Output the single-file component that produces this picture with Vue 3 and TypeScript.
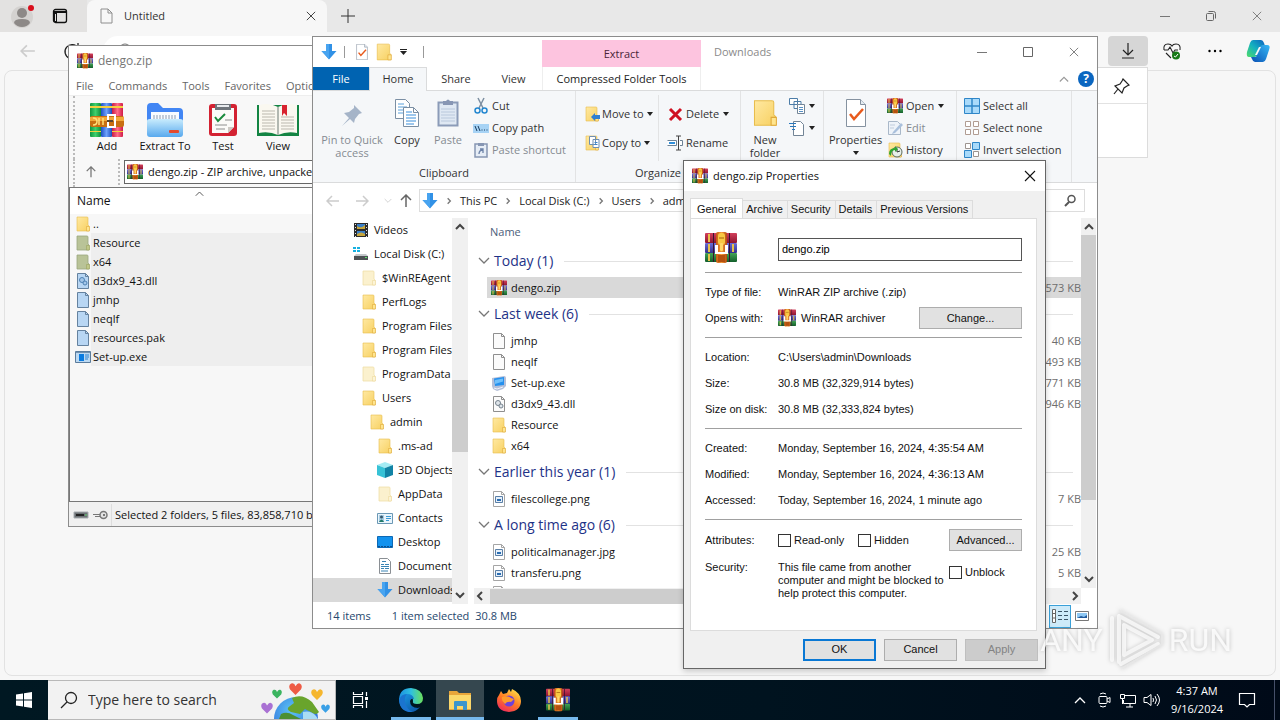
<script setup lang="ts">
import { ref } from 'vue'

interface Entry { name: string; icon: string; size?: string; selected?: boolean }
interface Group { title: string; rows: Entry[] }
interface TreeNode { name: string; icon: string; depth: number; current?: boolean }

const archiveTools = [
  { label: 'Add', icon: 'books', width: 56 },
  { label: 'Extract To', icon: 'extract', width: 60 },
  { label: 'Test', icon: 'clipcheck', width: 56 },
  { label: 'View', icon: 'book', width: 54 },
]
const archiveMenu = ['File', 'Commands', 'Tools', 'Favorites', 'Options']
const archiveRows: Entry[] = [
  { name: '..', icon: 'folder' },
  { name: 'Resource', icon: 'folder-sel', selected: true },
  { name: 'x64', icon: 'folder-sel', selected: true },
  { name: 'd3dx9_43.dll', icon: 'dll-sel', selected: true },
  { name: 'jmhp', icon: 'doc-sel', selected: true },
  { name: 'neqlf', icon: 'doc-sel', selected: true },
  { name: 'resources.pak', icon: 'doc-sel', selected: true },
  { name: 'Set-up.exe', icon: 'exe-sel', selected: true },
]

const tree: TreeNode[] = [
  { name: 'Videos', icon: 'video', depth: 0 },
  { name: 'Local Disk (C:)', icon: 'disk', depth: 0 },
  { name: '$WinREAgent', icon: 'folder-pale', depth: 1 },
  { name: 'PerfLogs', icon: 'folder', depth: 1 },
  { name: 'Program Files', icon: 'folder', depth: 1 },
  { name: 'Program Files (x86)', icon: 'folder', depth: 1 },
  { name: 'ProgramData', icon: 'folder-pale', depth: 1 },
  { name: 'Users', icon: 'folder', depth: 1 },
  { name: 'admin', icon: 'folder', depth: 2 },
  { name: '.ms-ad', icon: 'folder', depth: 3 },
  { name: '3D Objects', icon: 'cube', depth: 3 },
  { name: 'AppData', icon: 'folder-pale', depth: 3 },
  { name: 'Contacts', icon: 'contact', depth: 3 },
  { name: 'Desktop', icon: 'screen', depth: 3 },
  { name: 'Documents', icon: 'docs', depth: 3 },
  { name: 'Downloads', icon: 'down', depth: 3, current: true },
]

const groups: Group[] = [
  { title: 'Today (1)', rows: [{ name: 'dengo.zip', icon: 'rar', size: '31,573 KB', selected: true }] },
  {
    title: 'Last week (6)',
    rows: [
      { name: 'jmhp', icon: 'doc', size: '40 KB' },
      { name: 'neqlf', icon: 'doc', size: '1,493 KB' },
      { name: 'Set-up.exe', icon: 'setup', size: '6,771 KB' },
      { name: 'd3dx9_43.dll', icon: 'dll', size: '1,946 KB' },
      { name: 'Resource', icon: 'folder' },
      { name: 'x64', icon: 'folder' },
    ],
  },
  { title: 'Earlier this year (1)', rows: [{ name: 'filescollege.png', icon: 'img', size: '7 KB' }] },
  {
    title: 'A long time ago (6)',
    rows: [
      { name: 'politicalmanager.jpg', icon: 'img', size: '25 KB' },
      { name: 'transferu.png', icon: 'img', size: '5 KB' },
      { name: '', icon: 'img' },
    ],
  },
]

const crumbs = ['This PC', 'Local Disk (C:)', 'Users', 'admin']
const tabs = ['General', 'Archive', 'Security', 'Details', 'Previous Versions']
const activeTab = ref('General')
const fileName = ref('dengo.zip')
const location = [
  ['Location:', 'C:\\Users\\admin\\Downloads'],
  ['Size:', '30.8 MB (32,329,914 bytes)'],
  ['Size on disk:', '30.8 MB (32,333,824 bytes)'],
]
const dates = [
  ['Created:', 'Monday, September 16, 2024, 4:35:54 AM'],
  ['Modified:', 'Monday, September 16, 2024, 4:36:13 AM'],
  ['Accessed:', 'Today, September 16, 2024, 1 minute ago'],
]
</script>

<template>
  <svg class="sprite" aria-hidden="true">
    <defs>
      <linearGradient id="gf" x1="0" y1="0" x2="1" y2="1"><stop offset="0" stop-color="#ffe9a2" /><stop offset="1" stop-color="#f7d061" /></linearGradient>
      <linearGradient id="gr" x1="0" y1="0" x2="0" y2="1"><stop offset="0" stop-color="#d3405c" /><stop offset="1" stop-color="#8e1430" /></linearGradient>
      <linearGradient id="gb" x1="0" y1="0" x2="0" y2="1"><stop offset="0" stop-color="#6a6ed8" /><stop offset="1" stop-color="#33308c" /></linearGradient>
      <linearGradient id="gg" x1="0" y1="0" x2="0" y2="1"><stop offset="0" stop-color="#42a456" /><stop offset="1" stop-color="#135f2b" /></linearGradient>
      <linearGradient id="go" x1="0" y1="0" x2="1" y2="0"><stop offset="0" stop-color="#c55a12" /><stop offset=".5" stop-color="#f39a3c" /><stop offset="1" stop-color="#b44b10" /></linearGradient>
      <linearGradient id="ge" x1="0" y1="0" x2="0" y2="1"><stop offset="0" stop-color="#c9ecfd" /><stop offset="1" stop-color="#58a9ee" /></linearGradient>
      <linearGradient id="bk1" x1="0" y1="0" x2="1" y2="0"><stop offset="0" stop-color="#0f9440" /><stop offset=".5" stop-color="#3fd06c" /><stop offset="1" stop-color="#0f8c3a" /></linearGradient>
      <linearGradient id="bk2" x1="0" y1="0" x2="1" y2="0"><stop offset="0" stop-color="#1d4fc4" /><stop offset=".5" stop-color="#6ea2fb" /><stop offset="1" stop-color="#1c4cbc" /></linearGradient>
      <linearGradient id="bk3" x1="0" y1="0" x2="1" y2="0"><stop offset="0" stop-color="#c81a44" /><stop offset=".5" stop-color="#ff6c88" /><stop offset="1" stop-color="#d01c48" /></linearGradient>
      <linearGradient id="edge1" x1="0" y1="0" x2="1" y2="0"><stop offset="0" stop-color="#1b8fe0" /><stop offset=".5" stop-color="#2fc0e0" /><stop offset="1" stop-color="#6be05a" /></linearGradient>
      <linearGradient id="edge2" x1="0" y1="0" x2="1" y2="1"><stop offset="0" stop-color="#1b9de8" /><stop offset="1" stop-color="#0b4fa0" /></linearGradient>
      <linearGradient id="ff" x1=".8" y1="0" x2=".2" y2="1"><stop offset="0" stop-color="#ffe14a" /><stop offset=".5" stop-color="#ff7a22" /><stop offset="1" stop-color="#ee2561" /></linearGradient>
      <linearGradient id="cp1" x1="0" y1="1" x2="1" y2="0"><stop offset="0" stop-color="#4fdc6a" /><stop offset=".5" stop-color="#14b0c0" /><stop offset="1" stop-color="#0d5fc0" /></linearGradient>
      <linearGradient id="cp2" x1="0" y1="1" x2="1" y2="0"><stop offset="0" stop-color="#0a50b4" /><stop offset="1" stop-color="#35b8f5" /></linearGradient>
      <radialGradient id="globe" cx=".4" cy=".3" r=".7"><stop offset="0" stop-color="#5cc3f5" /><stop offset="1" stop-color="#2b66d8" /></radialGradient>
    </defs>
    <symbol id="rar" viewBox="0 0 32 32">
      <rect x="0" y="1" width="32" height="10" rx="1" fill="url(#gr)" /><rect x="0" y="11" width="32" height="10" rx="1" fill="url(#gb)" /><rect x="0" y="21" width="32" height="9" rx="1" fill="url(#gg)" />
      <path d="M3 2h2v8H3zM3 12h2v8H3zM3 22h2v7H3zM27 12h2v8h-2z" fill="#e8c24a" /><path d="M8 1h1v29H8zM24 1h1v29h-1z" fill="#3a1230" />
      <rect x="11" y="0" width="11" height="31" rx="2" fill="url(#go)" />
      <rect x="13" y="1" width="7" height="12" rx="3" fill="#f8c843" /><path d="M14 6h5" stroke="#a8640e" />
      <path d="M10 13h3v7h7v-7h3v9H10z" fill="#fff" /><rect x="15" y="11" width="3" height="8" rx="1" fill="#ffd868" /><path d="M13 23h7v7h-7z" fill="#b4500f" />
    </symbol>
    <symbol id="books" viewBox="0 0 34 34">
      <rect x="0" y="0" width="11" height="34" rx="1" fill="url(#bk1)" /><rect x="11" y="0" width="11" height="34" rx="1" fill="url(#bk2)" /><rect x="22" y="0" width="11" height="34" rx="1" fill="url(#bk3)" />
      <path d="M0 3h11v2H0zM11 3h11v2H11zM22 3h11v2H22zM0 28h11v1H0zM22 28h11v1H22z" fill="#f4cf3f" />
      <rect x="0" y="13" width="34" height="11" rx="2" fill="#c86f12" /><path d="M0 14h34v4H0z" fill="#f2a83a" />
      <path d="M3 15q4 0 4 3.500T3 22M9 15v7M13 15v7" fill="none" stroke="#ffe07a" stroke-width="1.500" /><rect x="18" y="12" width="7" height="12" fill="none" stroke="#fff" stroke-width="2" /><path d="M17 18h6" stroke="#5b4630" stroke-width="2" />
    </symbol>
    <symbol id="extract" viewBox="0 0 36 34">
      <path d="M0 4q0-4 4-4h7l5 5h16q4 0 4 4v9H0z" fill="#4286f4" /><path d="M4 9h28v10H4z" fill="#f8fbff" />
      <path d="M6 13h24M6 15h24" stroke="#8d9cb2" stroke-dasharray="2 1" /><path d="M0 18q0-2 3-2h30q3 0 3 2v13q0 3-3 3H3q-3 0-3-3z" fill="url(#ge)" /><rect x="22" y="27" width="10" height="3" rx="1" fill="#e4492c" />
    </symbol>
    <symbol id="clipcheck" viewBox="0 0 30 34">
      <rect x="1" y="1" width="28" height="32" rx="3" fill="#d32232" /><path d="M4 5h22v19l-6 6H4z" fill="#fbfaf8" /><path d="M20 30v-6h6z" fill="#cdc9c4" />
      <path d="M7 1h16v6H7z" fill="#6f757b" /><path d="M9 2h12v2H9z" fill="#e8ebee" /><path d="m7 14 3 4 7-7" fill="none" stroke="#1a8a3c" stroke-width="2" /><path d="M17 17h7M7 22h12M8 26h9" stroke="#8e8e8e" />
    </symbol>
    <symbol id="book" viewBox="0 0 42 34">
      <path d="M0 2h42v31H0z" fill="#138443" /><path d="M2 2q10-3 19 2 9-5 19-2v28q-10-2-19 2-9-4-19-2z" fill="#faf8f0" />
      <path d="M21 4v28" stroke="#9aa39c" stroke-width="1.500" /><path d="M5 8h13M5 11h13M5 14h13M5 17h13M5 20h13M5 23h13M5 26h13M24 14h13M24 17h13M24 20h13M24 23h13M24 26h13" stroke="#bbb8ae" /><path d="M25 2h5v11l-3-3-2 3z" fill="#d8232f" />
    </symbol>
    <symbol id="folder" viewBox="0 0 16 16"><path d="M2 1h10q1 0 1 1v7l1 1v5H2z" fill="url(#gf)" stroke="#e8bd4c" stroke-width=".6" /><path d="M11.500 10.500h3V15h-3z" fill="#ffe58e" stroke="#dfa93b" stroke-width=".6" /></symbol>
    <symbol id="folder-pale" viewBox="0 0 16 16"><path d="M2 1h10q1 0 1 1v7l1 1v5H2z" fill="#fbf1ce" stroke="#f0e0a8" stroke-width=".8" /><path d="M11.500 10.500h3V15h-3z" fill="#fcf4d6" stroke="#ecd99a" stroke-width=".6" /></symbol>
    <symbol id="folder-sel" viewBox="0 0 16 16"><path d="M2 1h10q1 0 1 1v7l1 1v5H2z" fill="#b9c398" stroke="#9aa67e" stroke-width=".8" /><path d="M11.500 10.500h3V15h-3z" fill="#bfc788" stroke="#9aa35f" stroke-width=".6" /></symbol>
    <symbol id="doc" viewBox="0 0 16 16"><path d="M2.500.5h8l3 3v12h-11z" fill="#fbfbfb" stroke="#8f8f8f" /><path d="M10.500.5v3h3" fill="none" stroke="#8f8f8f" /></symbol>
    <symbol id="doc-sel" viewBox="0 0 16 16"><path d="M2.500.5h8l3 3v12h-11z" fill="#b8d6f3" stroke="#65829f" /><path d="M10.500.5v3h3" fill="none" stroke="#65829f" /></symbol>
    <symbol id="dll" viewBox="0 0 16 16"><use href="#doc" /><circle cx="7" cy="7" r="2.500" fill="#dfe5ea" stroke="#75828e" /><circle cx="10" cy="10" r="2" fill="#dfe5ea" stroke="#75828e" /></symbol>
    <symbol id="dll-sel" viewBox="0 0 16 16"><use href="#doc-sel" /><circle cx="7" cy="7" r="2.500" fill="#a4c6e8" stroke="#4e82b4" /><circle cx="10" cy="10" r="2" fill="#a4c6e8" stroke="#4e82b4" /></symbol>
    <symbol id="exe-sel" viewBox="0 0 16 16"><path d="M.5 2.500h15v11H.5z" fill="#bcd9f2" stroke="#5b7c9c" /><path d="M1 3h14v1H1z" fill="#6f90b0" /><path d="M4 5h5v7H4z" fill="#0a7be0" /><path d="M10 6h4M10 8h4M10 10h3" stroke="#2f82cf" /></symbol>
    <symbol id="setup" viewBox="0 0 16 16"><path d="M1 3 13 1q2 0 2 2v8l-3 3-6 2-4-2-1-3z" fill="#b4bfd8" /><path d="m3 3.500 10-1.500v8L4 11z" fill="#2590ee" /><path d="m4 5 8-1.500v3L4 9z" fill="#6fc0fb" /><path d="m3 13 3 1 6-2" stroke="#eef2fb" fill="none" /></symbol>
    <symbol id="img" viewBox="0 0 16 16"><path d="M2.500.5h8l3 3v12h-11z" fill="#fff" stroke="#a5a5a5" /><path d="M10.500.5v3h3" fill="none" stroke="#a5a5a5" /><path d="M4.500 5.500h7v6h-7z" fill="#e6f0fa" stroke="#5a7fa6" /><path d="M6 8h4v2H6z" fill="#2a6db2" /></symbol>
    <symbol id="video" viewBox="0 0 16 16"><path d="M1 1h14v14H1z" fill="#2b2b2b" /><path d="M4 2h8v5H4zM4 9h8v5H4z" fill="#3a7fc8" /><path d="M4 4q4 3 8-1v4H4zM4 12q4-3 8 0v2H4z" fill="#c7a53a" /><path d="M2.500 2v13M13.500 2v13" stroke="#e4e4e4" stroke-dasharray="1 2" /></symbol>
    <symbol id="disk" viewBox="0 0 16 16"><path d="M0 1h3v2H0zM4 1h3v2H4zM0 4h3v2H0zM4 4h3v2H4z" fill="#16b0e0" /><path d="M3 8h10l2 2H1z" fill="#c4c8cb" /><path d="M1 10h14v4H1z" fill="#4c5154" /><path d="M12 11h2v1h-2z" fill="#5be36a" /></symbol>
    <symbol id="cube" viewBox="0 0 16 16"><path d="M8 0 16 3 8 6 0 3z" fill="#a5ecf4" /><path d="M0 3l8 3v10l-8-3z" fill="#37c2d6" /><path d="M16 3 8 6v10l8-3z" fill="#1283a5" /></symbol>
    <symbol id="contact" viewBox="0 0 16 16"><path d="M.5 3.500h15v10H.5z" fill="#eaf5fc" stroke="#6b98b5" /><path d="M2 5h5v7H2z" fill="#a9cde4" /><circle cx="4.500" cy="7" r="1.500" fill="#35566c" /><path d="M2 12q2.500-5 5 0z" fill="#1f7a68" /><path d="M9 6.500h5M9 8.500h5M9 10.500h3" stroke="#3c9bd6" /></symbol>
    <symbol id="screen" viewBox="0 0 16 16"><path d="M.5 2.500h15v11H.5z" fill="#1292ee" stroke="#0c68b4" /><path d="M1 12.500h14" stroke="#0a4e8c" stroke-dasharray="2 1" /></symbol>
    <symbol id="docs" viewBox="0 0 16 16"><path d="M2.500.5h8l3 3v12h-11z" fill="#fff" stroke="#8a8f94" /><path d="M5 3.500h4M4 6.500h3M8 6.500h4M4 8.500h8M4 10.500h3M8 10.500h4M4 13h7" stroke="#3a84b4" /></symbol>
    <symbol id="down" viewBox="0 0 16 16"><path d="M5 0h6v7h4.500L8 15.500.5 7H5z" fill="#3191e6" /><path d="M5 0h3v15L.5 7H5z" fill="#48a4f0" /></symbol>
    <symbol id="edit" viewBox="0 0 16 16"><path d="M1.500 1.500h9l3 3v10h-12z" fill="#eef3f9" stroke="#a9b8c9" /><path d="m6 12 8-9 2 2-8 8-3 1z" fill="#a9c0dc" /><path d="M3 5h5M3 8h4" stroke="#c0cddd" /></symbol>
    <symbol id="props" viewBox="0 0 20 28"><path d="M.5.500h14l5 5v22H.5z" fill="#fff" stroke="#8592a0" /><path d="M14.500.5v5h5" fill="#e4ecf2" stroke="#8592a0" /><path d="m4 15 4 5 9-10" fill="none" stroke="#e85a1c" stroke-width="2.500" /></symbol>
    <symbol id="copy" viewBox="0 0 24 28"><path d="M.5.500h10l4 4v15H.5z" fill="#fff" stroke="#7b8fa4" /><path d="M3 5h6M3 8h9M3 11h9M3 14h9" stroke="#5aa1dc" /><path d="M8.500 8.500h10l5 5v14h-15z" fill="#fff" stroke="#7b8fa4" /><path d="M18.500 8.500v5h5" fill="none" stroke="#7b8fa4" /><path d="M11 13h6M11 16h10M11 19h10M11 22h10M11 25h8" stroke="#3b8fdb" /></symbol>
    <symbol id="paste" viewBox="0 0 22 28"><path d="M1.500 3.500h19v23h-19z" fill="#dfe8f3" stroke="#8b9bb8" stroke-width="2" /><path d="M6 2h3q2-3 4 0h3v4H6z" fill="#8796b4" /><path d="M4 10h14M4 13h14M4 16h14M4 19h14M4 22h14" stroke="#b9c8dc" /></symbol>
    <symbol id="pin" viewBox="0 0 24 24"><path d="m14 2 8 8-3 1-4 5-1 4-4-4-8 7 7-8-5-5 5-1 5-4z" fill="#a5b4c8" /></symbol>
    <symbol id="caret" viewBox="0 0 6 4"><path d="M0 0h6L3 4z" fill="currentColor" /></symbol>
    <symbol id="chev" viewBox="0 0 12 12"><path d="m1 3 5 5 5-5" fill="none" stroke="currentColor" stroke-width="1.300" /></symbol>
    <symbol id="bold-chev" viewBox="0 0 12 12"><path d="m2 4 4 4 4-4" fill="none" stroke="currentColor" stroke-width="2" /></symbol>
    <symbol id="cross" viewBox="0 0 12 12"><path d="m1 1 10 10M11 1 1 11" fill="none" stroke="currentColor" stroke-width="1.100" /></symbol>
    <symbol id="arrow" viewBox="0 0 14 14"><path d="M13 7H1M6 2 1 7l5 5" fill="none" stroke="currentColor" stroke-width="1.500" /></symbol>
    <symbol id="heart" viewBox="0 0 12 11"><path d="M6 11 1 6Q-1 2 2 .5 5-.5 6 3 8-.5 10 .5q3 1.500 1 5.500z" fill="currentColor" /></symbol>
  </svg>

  <main class="desktop">
    <section class="browser" aria-label="Browser">
      <header class="strip">
        <div class="strip-left">
          <button class="plain avatar" aria-label="Profile">
            <svg viewBox="0 0 24 24"><circle cx="11" cy="13" r="11" fill="#d4d2d0" /><circle cx="11" cy="9" r="5" fill="#8d8987" /><path d="M3 19q0-4 8-4t8 4q-3 4-8 4t-8-4z" fill="#8d8987" /><circle cx="20" cy="4" r="3" fill="#d90f1c" /></svg>
          </button>
          <button class="plain" aria-label="Tab actions">
            <svg class="i16" viewBox="0 0 16 16"><rect x="1.500" y="1.500" width="13" height="13" rx="2" fill="none" stroke="#111" stroke-width="1.300" /><path d="M2 3h12v2H2zM2 5h3v9H2z" fill="#111" /><path d="M3 6h1v7H3z" fill="#e3e2e1" /></svg>
          </button>
        </div>
        <div class="btab">
          <svg class="i16" viewBox="0 0 16 16"><path d="M3 1h7l4 4v10H3zM10 1v4h4" fill="none" stroke="#8e8e8e" /></svg>
          <span>Untitled</span>
          <button class="plain" aria-label="Close tab"><svg class="i10"><use href="#cross" /></svg></button>
        </div>
        <button class="plain newtab" aria-label="New tab"><svg class="i14" viewBox="0 0 14 14"><path d="M7 0v14M0 7h14" stroke="#333" /></svg></button>
        <div class="bctl">
          <button class="plain" aria-label="Minimize"><svg class="i10" viewBox="0 0 10 10"><path d="M0 5.500h10" stroke="#777" /></svg></button>
          <button class="plain" aria-label="Restore"><svg class="i10" viewBox="0 0 10 10"><rect x=".5" y="2.500" width="7" height="7" rx="1" fill="none" stroke="#666" /><path d="M2.500.5h5q2 0 2 2v5" fill="none" stroke="#666" /></svg></button>
          <button class="plain" aria-label="Close"><svg class="i10"><use href="#cross" /></svg></button>
        </div>
      </header>
      <div class="bbar">
        <button class="plain back" aria-label="Back"><svg class="i16"><use href="#arrow" /></svg></button>
        <button class="plain reload" aria-label="Reload"><svg class="i16" viewBox="0 0 16 16"><path d="M14 5a7 7 0 1 0 1 4M14 0v5H9" fill="none" stroke="#222" stroke-width="1.300" /></svg></button>
        <div class="omni"><svg class="i16" viewBox="0 0 16 16"><circle cx="7" cy="7" r="6" fill="none" stroke="#777" /></svg></div>
        <div class="bicons">
          <button class="plain dl" aria-label="Downloads"><svg class="i16" viewBox="0 0 16 16"><path d="M8 0v12M3 7l5 5 5-5M2 15h12" fill="none" stroke="#222" stroke-width="1.200" /></svg></button>
          <button class="plain" aria-label="Browser essentials"><svg class="i18" viewBox="0 0 18 18"><path d="M1 8Q0 2 5 2q3 0 4 2 1-2 4-2 5 0 4 6M1 8h4l2-3 3 6 2-3h3M3 11l5 5" fill="none" stroke="#222" stroke-width="1.100" /><circle cx="13" cy="13.500" r="4" fill="#177a17" /><path d="m11 14 1.500 1 2.500-3" stroke="#fff" fill="none" /></svg></button>
          <button class="plain" aria-label="Settings and more"><svg class="i14" viewBox="0 0 14 14"><circle cx="1.500" cy="7" r="1.200" /><circle cx="7" cy="7" r="1.200" /><circle cx="12.500" cy="7" r="1.200" /></svg></button>
          <button class="plain" aria-label="Copilot"><svg class="i24" viewBox="0 0 24 24"><path d="M7 1h8q2 0 3 3l1 3h-4l-4 10q-1 1-3 1H3q-3 0-2-5l3-9q1-3 3-3z" fill="url(#cp1)" /><path d="M17 23H9q-2 0-3-3l-1-2h5l4-10q1-2 3-2h4q4 0 2 5l-3 9q-1 3-3 3z" fill="url(#cp2)" /><path d="M13 8h2l-4 8H9z" fill="#f7f7f7" /></svg></button>
        </div>
      </div>
      <div class="page"></div>
      <aside class="flyout" aria-label="Downloads panel">
        <div class="flyhead"><button class="plain" aria-label="Pin downloads"><svg class="i18" viewBox="0 0 18 18"><path d="m10 2 6 6-2 1-3 2-2 5-7-7 5-2 2-3zM5 12l-4 5" fill="none" stroke="#222" stroke-width="1.200" /></svg></button></div>
      </aside>
    </section>

    <section class="win archive" aria-label="dengo.zip archive">
      <header class="a-title"><svg class="i16"><use href="#rar" /></svg><span>dengo.zip</span></header>
      <nav class="a-menu"><button v-for="m in archiveMenu" :key="m" class="plain">{{ m }}</button></nav>
      <div class="a-tools">
        <button v-for="t in archiveTools" :key="t.label" class="plain" :style="{ width: t.width + 'px' }">
          <svg :class="['tool', t.icon]"><use :href="'#' + t.icon" /></svg>{{ t.label }}
        </button>
      </div>
      <div class="a-addr">
        <button class="plain up" aria-label="Up one level"><svg class="i12 rot"><use href="#arrow" /></svg></button>
        <div class="a-combo"><svg class="i16"><use href="#rar" /></svg><span>dengo.zip - ZIP archive, unpacked size 83,858,710 bytes</span></div>
      </div>
      <div class="a-list">
        <svg class="a-sort"><use href="#chev" /></svg>
        <table>
          <thead><tr><th>Name</th></tr></thead>
          <tbody>
            <tr v-for="r in archiveRows" :key="r.name">
              <td><div class="a-cell"><svg class="i16"><use :href="'#' + r.icon" /></svg><span :class="{ sel: r.selected }">{{ r.name }}</span></div></td>
            </tr>
          </tbody>
        </table>
      </div>
      <footer class="a-status">
        <svg class="i16" viewBox="0 0 16 16"><path d="M1 5h14v6H1z" fill="#6b7074" stroke="#a8acb0" /><path d="M3 8h8" stroke="#222" stroke-width="2" /><path d="M12 8h2" stroke="#5ed36c" /></svg>
        <svg class="i16" viewBox="0 0 16 16"><circle cx="11.500" cy="8" r="3.500" fill="#e3e3e3" stroke="#777" stroke-width="1.500" /><circle cx="12" cy="8" r="1" fill="#555" /><path d="M8 7.500H1M8 9.500H3" stroke="#777" /></svg>
        <span>Selected 2 folders, 5 files, 83,858,710 bytes</span>
      </footer>
    </section>

    <section class="win explorer" aria-label="Downloads">
      <header class="e-title">
        <div class="quick">
          <svg class="i16"><use href="#down" /></svg><i class="bar"></i>
          <button class="plain" aria-label="Properties"><svg class="i16"><use href="#props" /></svg></button>
          <button class="plain" aria-label="New folder"><svg class="i18"><use href="#folder" /></svg></button>
          <button class="plain" aria-label="Customize"><svg class="qa" viewBox="0 0 7 6"><path d="M0 .5h7" stroke="#222" /><path d="M0 2h7L3.500 6z" fill="#222" /></svg></button><i class="bar"></i>
        </div>
        <div class="context">Extract</div>
        <div class="caption">Downloads</div>
        <div class="ectl">
          <button class="plain" aria-label="Minimize"><svg class="i10" viewBox="0 0 10 10"><path d="M0 5.500h10" stroke="#777" /></svg></button>
          <button class="plain" aria-label="Maximize"><svg class="i10" viewBox="0 0 10 10"><path d="M.5.500h9v9h-9z" fill="none" stroke="#666" /></svg></button>
          <button class="plain" aria-label="Close"><svg class="i10"><use href="#cross" /></svg></button>
        </div>
      </header>
      <nav class="e-tabs">
        <button class="plain file">File</button><button class="plain home">Home</button><button class="plain share">Share</button><button class="plain view">View</button><button class="plain comp">Compressed Folder Tools</button>
        <div class="e-help">
          <button class="plain" aria-label="Collapse ribbon"><svg class="i10 flip"><use href="#chev" /></svg></button>
          <button class="help" aria-label="Help">?</button>
        </div>
      </nav>
      <div class="ribbon">
        <div class="rg clip">
          <div class="rbody">
            <button class="plain big off pinb"><svg class="i24"><use href="#pin" /></svg><span>Pin to Quick access</span></button>
            <button class="plain big copyb"><svg class="i28"><use href="#copy" /></svg><span>Copy</span></button>
            <button class="plain big off pasteb"><svg class="i28"><use href="#paste" /></svg><span>Paste</span></button>
            <div class="small">
              <button class="plain"><svg class="i16" viewBox="0 0 16 16"><path d="m5 0 5 10M11 0 6 10" stroke="#7d8fa2" stroke-width="1.500" /><circle cx="4.500" cy="12.500" r="2.500" fill="none" stroke="#2487d0" stroke-width="1.500" /><circle cx="11.500" cy="12.500" r="2.500" fill="none" stroke="#2487d0" stroke-width="1.500" /></svg>Cut</button>
              <button class="plain"><svg class="i16" viewBox="0 0 16 16"><path d="M0 4h16v9H0z" fill="#a7d3f5" /><path d="m2 6 2 5M5 6l2 5M8.500 10h1M11 10h1M13.500 10h1" stroke="#173b5e" /></svg>Copy path</button>
              <button class="plain off"><svg class="i16" viewBox="0 0 16 16"><path d="M2 2h12v13H2z" fill="#e6edf6" stroke="#8696b3" stroke-width="1.500" /><path d="M5 1h6v3H5z" fill="#8696b3" /><path d="M6 12q0-4 4-4M7 7h3v4" fill="none" stroke="#6d83a8" stroke-width="1.300" /></svg>Paste shortcut</button>
            </div>
          </div>
          <div class="rname">Clipboard</div>
        </div>
        <div class="rg org">
          <div class="rbody two">
            <div class="small wide">
              <button class="plain"><svg class="i16" viewBox="0 0 16 16"><use href="#folder" /><path d="M16 9h-5V7l-4 4 4 4v-2h5z" fill="#2f7fd2" /></svg>Move to<svg class="caret"><use href="#caret" /></svg></button>
              <button class="plain"><svg class="i16" viewBox="0 0 16 16"><use href="#folder" /><path d="M5.500 1.500h6v8h-6zM9 4.500h6v8H9z" fill="#fff" stroke="#6f8fb0" /><path d="M10.500 7.500h3M10.500 9.500h3" stroke="#3d86ca" /></svg>Copy to<svg class="caret"><use href="#caret" /></svg></button>
            </div>
            <div class="small wide second">
              <button class="plain"><svg class="i16" viewBox="0 0 16 16"><path d="m3 3 11 11M14 3 3 14" stroke="#cf1020" stroke-width="3" /></svg>Delete<svg class="caret"><use href="#caret" /></svg></button>
              <button class="plain"><svg class="i16" viewBox="0 0 16 16"><path d="M.5 5.500h9v5h-9M13 5.500h2.500v5H13" fill="#fff" stroke="#6c8296" /><path d="M2 7h6v2H2z" fill="#2f8fdb" /><path d="M9 1h5M11.500 1v14M9 15h5" stroke="#444" /></svg>Rename</button>
            </div>
          </div>
          <div class="rname">Organize</div>
        </div>
        <div class="rg new">
          <div class="rbody">
            <button class="plain big newb"><svg class="i28"><use href="#folder" /></svg><span>New folder</span></button>
            <div class="small tiny">
              <button class="plain" aria-label="New item"><svg class="i16" viewBox="0 0 16 16"><path d="M.5.500h8v6h-8zM5 3.500h7v7H5z" fill="#fff" stroke="#4d7da8" /><path d="M8.500 6.500h7v9h-7z" fill="#fff" stroke="#728496" /><path d="M10 9.500h4M10 11.500h4M10 13.500h4" stroke="#5790c4" /></svg><svg class="caret"><use href="#caret" /></svg></button>
              <button class="plain" aria-label="Easy access"><svg class="i16" viewBox="0 0 16 16"><path d="M4.500 1.500h7l3 3v11h-10z" fill="#fff" stroke="#728496" /><path d="M0 3.500h7M1 6.500h6M3 9.500h3" stroke="#2878bd" /></svg><svg class="caret"><use href="#caret" /></svg></button>
            </div>
          </div>
          <div class="rname">New</div>
        </div>
        <div class="rg open">
          <div class="rbody">
            <button class="plain big propb"><svg class="i28"><use href="#props" /></svg><span>Properties</span><svg class="caret"><use href="#caret" /></svg></button>
            <div class="small">
              <button class="plain"><svg class="i16"><use href="#rar" /></svg>Open<svg class="caret"><use href="#caret" /></svg></button>
              <button class="plain off"><svg class="i16"><use href="#edit" /></svg>Edit</button>
              <button class="plain"><svg class="i16" viewBox="0 0 16 16"><use href="#folder" /><circle cx="10" cy="10" r="5" fill="#e8efe9" stroke="#5a6a5e" /><path d="M10 7v3l3-1" stroke="#333" fill="none" /><path d="M2 12q0-6 6-6V4l3 3-3 3V8q-4 0-4 6z" fill="#2fa52f" /></svg>History</button>
            </div>
          </div>
          <div class="rname">Open</div>
        </div>
        <div class="rg select">
          <div class="rbody">
            <div class="small">
              <button class="plain"><svg class="i16" viewBox="0 0 16 16"><path d="M.5.500h15v15H.5z" fill="#a9dafa" stroke="#2f86c8" /><path d="M8 0v16M0 8h16" stroke="#2f86c8" stroke-width="1.500" /></svg>Select all</button>
              <button class="plain"><svg class="i16" viewBox="0 0 16 16"><path d="M1.500 1.500h5v5h-5zM9.500 1.500h5v5h-5zM1.500 9.500h5v5h-5zM9.500 9.500h5v5h-5z" fill="#fff" stroke="#b09c92" /></svg>Select none</button>
              <button class="plain"><svg class="i16" viewBox="0 0 16 16"><path d="M1.500 1.500h5v5h-5zM9.500 9.500h5v5h-5z" fill="#fff" stroke="#9c9490" /><path d="M8.500.5h7v7h-7zM.5 8.500h7v7h-7z" fill="#a9dafa" stroke="#2f86c8" /></svg>Invert selection</button>
            </div>
          </div>
          <div class="rname">Select</div>
        </div>
      </div>
      <div class="e-addr">
        <button class="plain dim" aria-label="Back"><svg class="i14"><use href="#arrow" /></svg></button>
        <button class="plain dim" aria-label="Forward"><svg class="i14 turn"><use href="#arrow" /></svg></button>
        <button class="plain dim recent" aria-label="Recent"><svg class="i8"><use href="#chev" /></svg></button>
        <button class="plain upb" aria-label="Up"><svg class="i14 rot"><use href="#arrow" /></svg></button>
        <nav class="crumbs">
          <svg class="i16"><use href="#down" /></svg>
          <template v-for="c in crumbs" :key="c"><svg class="i8 right sep"><use href="#bold-chev" /></svg><a href="#">{{ c }}</a></template>
        </nav>
        <div class="search"><svg class="i14" viewBox="0 0 14 14"><circle cx="8.500" cy="5" r="3.500" fill="none" stroke="#555" stroke-width="1.500" /><path d="m6 8-4 4" stroke="#555" stroke-width="2" /></svg></div>
      </div>
      <div class="e-body">
        <ul class="tree">
          <li v-for="n in tree" :key="n.name"><a href="#" :class="['d' + n.depth, { current: n.current }]"><svg class="i16"><use :href="'#' + n.icon" /></svg><span>{{ n.name }}</span></a></li>
        </ul>
        <div class="vs nav-vs"><svg class="i12 flip"><use href="#bold-chev" /></svg><i></i><svg class="i12"><use href="#bold-chev" /></svg></div>
        <div class="files">
          <div class="filebox">
            <table>
              <thead><tr><th>Name</th><th class="sizeh" aria-label="Size"></th></tr></thead>
              <tbody v-for="g in groups" :key="g.title">
                <tr class="group"><th colspan="2" scope="rowgroup"><div><svg class="i12"><use href="#chev" /></svg><span>{{ g.title }}</span><i></i></div></th></tr>
                <tr v-for="r in g.rows" :key="r.name" :class="{ picked: r.selected }">
                  <td class="nm"><div><svg class="i16"><use :href="'#' + r.icon" /></svg>{{ r.name }}</div></td><td class="sz">{{ r.size }}</td>
                </tr>
              </tbody>
            </table>
          </div>
          <div class="hs"><svg class="i12 left"><use href="#bold-chev" /></svg><i></i><svg class="i12 right"><use href="#bold-chev" /></svg></div>
        </div>
        <div class="vs file-vs"><svg class="i12 flip"><use href="#bold-chev" /></svg><i></i><svg class="i12"><use href="#bold-chev" /></svg></div>
      </div>
      <footer class="e-status">
        <span>14 items</span><span>1 item selected</span><span>30.8 MB</span>
        <div class="modes">
          <button class="plain mode on" aria-label="Details view"><svg class="i18" viewBox="0 0 18 18"><path d="M1.500 2.500h3v13h-3zM1.500 6.500h3M1.500 11h3" fill="#fff" stroke="#666" /><path d="M7 4.500h4M13 4.500h4M7 8.500h4M13 8.500h4M7 12.500h4M13 12.500h4" stroke="#3b5568" /></svg></button>
          <button class="plain mode" aria-label="Thumbnail view"><svg class="i14" viewBox="0 0 14 14"><path d="M.5 2.500h13v9H.5z" fill="#fff" stroke="#777" /><path d="M2 4h10v5H2z" fill="#8fc8f3" /><path d="m2 9 4-2 3 1 3-2v3z" fill="#20589a" /></svg></button>
        </div>
      </footer>
    </section>

    <section class="win dialog" role="dialog" aria-label="dengo.zip Properties">
      <header class="d-title"><svg class="i16"><use href="#rar" /></svg><span>dengo.zip Properties</span><button class="plain" aria-label="Close"><svg class="i12"><use href="#cross" /></svg></button></header>
      <div class="d-tabs" role="tablist"><button v-for="t in tabs" :key="t" role="tab" :class="{ active: t === activeTab }" :aria-selected="t === activeTab" @click="activeTab = t">{{ t }}</button></div>
      <div class="panel">
        <div class="p-head"><svg class="i32"><use href="#rar" /></svg><input v-model="fileName" type="text" aria-label="File name" /></div>
        <div class="sect">
          <div class="row"><span>Type of file:</span><span>WinRAR ZIP archive (.zip)</span></div>
          <div class="row"><span>Opens with:</span><span class="app"><svg class="i18"><use href="#rar" /></svg>WinRAR archiver</span><button class="btn change">Change...</button></div>
        </div>
        <div class="sect"><div v-for="r in location" :key="r[0]" class="row"><span>{{ r[0] }}</span><span>{{ r[1] }}</span></div></div>
        <div class="sect"><div v-for="r in dates" :key="r[0]" class="row"><span>{{ r[0] }}</span><span>{{ r[1] }}</span></div></div>
        <div class="sect last">
          <div class="row attrs"><span>Attributes:</span><label class="ro"><input type="checkbox" />Read-only</label><label><input type="checkbox" />Hidden</label><button class="btn adv">Advanced...</button></div>
          <div class="row secure"><span>Security:</span><p>This file came from another<br />computer and might be blocked to<br />help protect this computer.</p><label class="unb"><input type="checkbox" />Unblock</label></div>
        </div>
      </div>
      <footer class="d-foot"><button class="btn ok">OK</button><button class="btn">Cancel</button><button class="btn" disabled>Apply</button></footer>
    </section>

    <div class="mark">
      <span>ANY</span>
      <svg viewBox="0 0 56 62"><path d="M11 7v46M4 9v42M11 7 50 28M16 16v30l28-15zM13 55 50 35" fill="none" stroke="#fff" stroke-width="4" stroke-linejoin="round" stroke-linecap="round" /><path d="M11 1 54 25v10L13 60" fill="none" stroke="#e9e9e9" stroke-width="2" /></svg>
      <span>RUN</span>
    </div>

    <footer class="taskbar">
      <button class="plain start" aria-label="Start"><svg class="i16" viewBox="0 0 16 16"><path d="M0 2.500 7 1.500V7.500H0zM8 1.300 16 0v7.500H8zM0 8.500h7v6l-7-1zM8 8.500h8V16l-8-1.300z" fill="#fff" /></svg></button>
      <div class="tsearch">
        <svg class="i18" viewBox="0 0 18 18"><circle cx="11" cy="7" r="5.500" fill="none" stroke="#222" stroke-width="1.300" /><path d="m7 11-6 6" stroke="#222" stroke-width="1.300" /></svg>
        <input type="text" placeholder="Type here to search" aria-label="Search" />
        <svg class="earth" viewBox="0 0 72 38"><circle cx="35" cy="38" r="22" fill="url(#globe)" /><path d="M31 17q10-5 20 4l7 10q-3 4-8 0l-6-3-5 5-9-2q-6-3-1-6l4-3z" fill="#69a42c" /><path d="M20 33q6-3 12 1l8 4H18z" fill="#4c8f32" /><path d="M42 31q8-2 13 4l2 3H42z" fill="#a9dcf3" />
          <use href="#heart" x="0" y="21" width="12" height="12" color="#a971d3" /><use href="#heart" x="11" y="8" width="10" height="10" color="#3bb45f" /><use href="#heart" x="28" y="2" width="13" height="12" color="#ee5b45" /><use href="#heart" x="50" y="8" width="12" height="11" color="#f5b62d" /><use href="#heart" x="60" y="23" width="9" height="9" color="#3aa0e6" /></svg>
      </div>
      <nav class="apps">
        <button class="plain tasks" aria-label="Task view"><svg class="i18" viewBox="0 0 18 18"><path d="M2.500 5.500h9v7h-9zM2.500 1v2.500h9V1M2.500 17v-2.500h9V17M15.500 1v4M15.500 10v7" fill="none" stroke="#fff" stroke-width="1.200" /><path d="M14 6h3v3h-3z" fill="#fff" /></svg></button>
        <button class="plain run" aria-label="Edge"><svg class="i24" viewBox="0 0 24 24"><path d="M0 11Q1 0 12 0q11 1 12 10 0 6-6 6-5 0-4-3 0-5-5-5-6 0-9 5z" fill="url(#edge1)" /><path d="M0 12Q2 6 8 6q6 0 7 5-3-1-4 2 0 7 8 7l2-1q-4 5-9 5Q1 23 0 12z" fill="url(#edge2)" /><path d="M0 12Q2 6 8 6q-3 3-2 8 2 8 8 10Q1 25 0 12z" fill="#1b74cf" /></svg></button>
        <button class="plain run act" aria-label="File Explorer"><svg class="i24" viewBox="0 0 24 24"><path d="M1 3h8l2 2h12v17H1z" fill="#e8a53a" /><path d="M1 7h22v14H1z" fill="#fbd86b" /><path d="M6 22v-8q0-1 1-1h11q1 0 1 1v8h-4v-4H9v4z" fill="#3c95cc" /></svg></button>
        <button class="plain" aria-label="Firefox"><svg class="i24" viewBox="0 0 24 24"><path d="M2 7l2-4 2 3 4-1 2-4 2 3 1-3q9 4 9 12 0 10-12 11Q0 23 0 13q0-4 2-6z" fill="url(#ff)" /><circle cx="12" cy="13" r="5.500" fill="#7040d8" /><path d="M5 9q5-2 9 1l3 1-3 3q-4-1-6 2-4-3-3-7z" fill="#ff9a2a" /></svg></button>
        <button class="plain run" aria-label="WinRAR"><svg class="i24"><use href="#rar" /></svg></button>
      </nav>
      <div class="tray">
        <button class="plain" aria-label="Hidden icons"><svg class="i12 flip"><use href="#chev" /></svg></button>
        <button class="plain" aria-label="Meet now"><svg class="i16" viewBox="0 0 16 16"><rect x="3" y="4.500" width="8" height="7" rx="1" fill="none" stroke="#fff" /><path d="m11 7 3-1.500v5L11 9M4 2q3-2 6 0M4 14q3 2 6 0" fill="none" stroke="#fff" /></svg></button>
        <button class="plain" aria-label="Network"><svg class="i16" viewBox="0 0 16 16"><path d="M5 3.500h10.500v8H3.500V8M10 12v3M6 15h7M.5 2.500h4v4h-4zM2.500 7v5" fill="none" stroke="#fff" /></svg></button>
        <button class="plain" aria-label="Volume"><svg class="i18" viewBox="0 0 18 18"><path d="M1 6.500h3l4-3v11l-4-3H1zM10 7q1 2 0 4M12 5q3 4 0 8M14 3q5 6 0 12" fill="none" stroke="#fff" /></svg></button>
        <div class="clock"><span>4:37 AM</span><span>9/16/2024</span></div>
        <button class="plain note" aria-label="Notifications"><svg class="i16" viewBox="0 0 16 16"><path d="M.5 1.500h15v11h-5L8 15l-2.500-2.500h-5z" fill="none" stroke="#fff" stroke-width="1.200" /></svg></button>
        <i></i>
      </div>
    </footer>
  </main>
</template>

<style>
html, body { margin: 0; height: 100%; overflow: hidden; }
</style>

<style scoped>
.desktop { position: relative; display: flex; flex-direction: column; height: 100vh; overflow: hidden; background: #f7f7f7; color: #111; font: 11px/16px "Open Sans", "Noto Sans", sans-serif; }
.desktop *, .desktop *::before { box-sizing: border-box; }
.sprite { position: absolute; width: 0; height: 0; }
svg { display: block; flex: none; overflow: visible; }
.plain { display: flex; align-items: center; justify-content: center; padding: 0; border: 0; background: none; color: inherit; font: inherit; white-space: nowrap; }
a { color: inherit; text-decoration: none; white-space: nowrap; }
table { border-collapse: collapse; width: 100%; }
th, td { padding: 0; font-weight: 400; text-align: left; }
.i8 { width: 8px; height: 8px; } .i10 { width: 10px; height: 10px; } .i12 { width: 12px; height: 12px; } .i14 { width: 14px; height: 14px; }
.i16 { width: 16px; height: 16px; } .i18 { width: 18px; height: 18px; } .i24 { width: 24px; height: 24px; } .i28 { width: 28px; height: 28px; } .i32 { width: 32px; height: 32px; }
.flip { transform: rotate(180deg); } .right { transform: rotate(-90deg); } .left, .rot { transform: rotate(90deg); } .turn { transform: rotate(180deg); }
.win { position: absolute; display: flex; flex-direction: column; overflow: hidden; background: #fff; border: 1px solid #8c8c8c; }

.browser { position: relative; flex: 1; display: flex; flex-direction: column; background: #f7f7f7; }
.strip { display: flex; height: 32px; background: #e8e8e8; }
.strip-left { display: flex; align-items: center; gap: 17px; width: 87px; padding-left: 11px; background: #e3e2e1; }
.avatar svg { width: 24px; height: 24px; }
.btab { display: flex; align-items: center; gap: 10px; width: 240px; padding: 0 11px; background: #f7f7f7; border-radius: 8px 8px 0 0; color: #333; }
.btab span { flex: 1; }
.newtab { width: 42px; }
.bctl { display: flex; gap: 36px; margin-left: auto; padding-right: 18px; color: #777; }
.bbar { display: flex; align-items: center; height: 38px; }
.back { width: 56px; color: #ccc; }
.reload { width: 32px; }
.omni { display: flex; align-items: center; flex: 1; height: 30px; margin-left: 15px; padding-left: 15px; background: #fff; border-radius: 15px; }
.bicons { display: flex; align-items: center; gap: 5px; padding: 0 3px 0 10px; }
.bicons .plain { width: 38px; height: 30px; }
.bicons .dl { width: 40px; background: #d6d6d6; border-radius: 4px; }
.page { flex: 1; margin: 0 4px 4px; border: 1px solid #e2e2e2; border-radius: 8px; background: #f7f7f7; }
.flyout { position: absolute; top: 67px; right: 132px; width: 320px; height: 91px; background: #fff; border: 1px solid #dcdcdc; }
.flyhead { display: flex; justify-content: flex-end; height: 36px; padding-right: 16px; border-bottom: 1px solid #e2e2e2; }

.archive { left: 68px; top: 45px; width: 500px; height: 482px; background: #f8f8f8; }
.a-title { display: flex; align-items: center; gap: 5px; height: 30px; padding-left: 8px; background: #fff; color: #777; font-size: 12px; }
.a-menu { display: flex; gap: 15px; height: 20px; padding-left: 7px; background: #fff; color: #666; border-bottom: 1px solid #eee; }
.a-tools { display: flex; height: 63px; margin-left: 4px; border-left: 2px dotted #bbb; padding: 7px 0 0 4px; }
.a-tools .plain { flex-direction: column; justify-content: flex-start; gap: 0; line-height: 18px; }
.tool { height: 34px; }
.books { width: 34px; } .extract { width: 36px; } .clipcheck { width: 30px; } .book { width: 42px; }
.a-addr { display: flex; height: 28px; margin-left: 4px; padding-bottom: 2px; border-left: 2px dotted #bbb; }
.up { width: 45px; padding-right: 12px; color: #777; border-right: 2px dotted #bbb; }
.a-combo { display: flex; align-items: center; gap: 5px; flex: 1; height: 24px; margin: 1px 0 0 4px; padding-left: 2px; background: #fff; border: 1px solid #666; white-space: nowrap; }
.a-list { position: relative; flex: 1; border: 1px solid #777; background: #f7f7f7; }
.a-list th { height: 26px; padding-left: 7px; background: #fff; font-size: 12px; }
.a-list td { height: 19px; }
.a-sort { position: absolute; top: 1px; left: 125px; width: 9px; height: 9px; transform: rotate(180deg); color: #555; }
.a-cell { display: flex; align-items: center; padding-left: 5px; height: 19px; }
.a-cell span { flex: 1; padding-left: 2px; line-height: 19px; }
.a-cell .sel { background: #eee; }
.a-status { display: flex; align-items: center; gap: 3px; height: 24px; padding: 2px 0 0 4px; background: #f0f0f0; white-space: nowrap; }
.a-status span { padding-left: 3px; border-left: 1px solid #ddd; line-height: 22px; }

.explorer { left: 312px; top: 36px; width: 786px; height: 593px; }
.e-title { display: flex; height: 30px; }
.quick { display: flex; align-items: center; gap: 7px; width: 229px; padding-left: 8px; }
.quick .plain:nth-of-type(1) { margin-left: 2px; }
.quick .plain:nth-of-type(2) { margin-left: -2px; }
.qa { width: 7px; height: 6px; margin-right: 9px; }
.bar { width: 1px; height: 12px; background: #999; }
.context { width: 159px; margin-top: 3px; line-height: 28px; background: #fdc4df; text-align: center; color: #4a2438; }
.caption { flex: 1; padding-left: 13px; line-height: 29px; color: #8a8a8a; }
.ectl { display: flex; gap: 36px; padding-right: 18px; color: #777; }
.e-tabs { display: flex; height: 24px; border-bottom: 1px solid #dadbdc; color: #333; }
.e-tabs .plain { height: 23px; }
.e-tabs .file { width: 56px; background: #0063b1; color: #fff; }
.e-tabs .home { width: 58px; height: 24px; padding-bottom: 2px; background: #f5f7f9; border: 1px solid #dadbdc; border-bottom: 0; }
.e-tabs .share { width: 58px; } .e-tabs .view { width: 57px; }
.e-tabs .comp { width: 159px; border: 1px solid #eee; border-width: 0 1px; color: #222; }
.e-help { display: flex; align-items: center; gap: 9px; margin-left: auto; padding-right: 3px; color: #999; }
.help { width: 16px; height: 16px; padding: 0; border: 0; border-radius: 8px; background: #0b66c0; color: #fff; font: 700 12px/16px "Open Sans", sans-serif; }
.ribbon { display: flex; height: 92px; background: #f5f7f9; border-bottom: 1px solid #dadbdc; color: #333; }
.rg { display: flex; flex-direction: column; border-right: 1px solid #e2e3e4; padding-top: 4px; }
.clip { width: 263px; } .org { width: 165px; } .new { width: 83px; } .open { width: 133px; } .select { width: 115px; }
.rbody { display: flex; height: 66px; }
.rname { padding-top: 4px; text-align: center; line-height: 16px; }
.big { flex-direction: column; justify-content: flex-start; padding-top: 4px; line-height: 13px; white-space: normal; }
.big span { margin-top: 6px; }
.big .i24 { margin: 4px 0 0; }
.pinb { width: 78px; } .copyb { width: 32px; } .pasteb { width: 50px; } .newb { width: 48px; } .propb { width: 63px; }
.off { color: #858b92; }
.small { display: flex; flex-direction: column; }
.small .plain { justify-content: flex-start; gap: 3px; height: 22px; }
.small .plain .caret { margin-left: 1px; }
.caret { width: 6px; height: 4px; color: #222; }
.propb .caret { margin-top: 5px; }
.wide { width: 85px; padding: 4px 0 0 8px; }
.wide .plain { height: 29px; gap: 2px; }
.second { border-left: 1px solid #e2e3e4; }
.second .plain { gap: 3px; }
.select .small { padding-left: 7px; }
.e-addr { display: flex; align-items: center; height: 35px; padding-left: 12px; color: #666; }
.dim { color: #ccc; width: 16px; margin-right: 13px; }
.recent { width: 10px; margin-right: 5px; }
.upb { width: 16px; margin-right: 5px; }
.crumbs { display: flex; align-items: center; width: 435px; height: 23px; padding-left: 2px; border: 1px solid #ddd; color: #222; }
.sep { margin: 0 7px; color: #777; }
.search { display: flex; align-items: center; justify-content: flex-end; flex: 1; height: 23px; margin: 0 12px 0 8px; padding-right: 7px; border: 1px solid #ddd; }
.e-body { display: flex; flex: 1; min-height: 0; }
.tree { width: 139px; margin: 0; padding: 0; list-style: none; overflow: hidden; }
.tree a { display: flex; align-items: center; gap: 5px; height: 24px; }
.d0 { padding-left: 40px; } .d1 { padding-left: 48px; } .d2 { padding-left: 56px; } .d3 { padding-left: 64px; }
.current { background: #d9d9d9; }
.vs { display: flex; flex-direction: column; align-items: center; width: 16px; background: #f0f0f0; color: #444; padding: 3px 0; }
.vs i { width: 16px; background: #cdcdcd; }
.nav-vs i { height: 72px; margin: 147px 0 auto; }
.file-vs { width: 15px; margin: 0 1px 16px 0; }
.file-vs i { width: 15px; flex: 1; margin: 2px 0 73px; }
.files { display: flex; flex-direction: column; flex: 1; min-width: 0; padding-left: 6px; }
.filebox { flex: 1; min-height: 0; overflow: hidden; }
.filebox thead th { height: 27px; padding-left: 16px; color: #4c607a; }
.sizeh { width: 160px; }
.group div { display: flex; align-items: center; height: 32px; padding-left: 4px; color: #1e3287; font-size: 14px; }
.group span { margin: 0 11px 0 4px; line-height: 20px; }
.group .i12 { color: #777; }
.group i { flex: 1; height: 1px; margin-right: 8px; background: #e2e2e2; }
.nm { padding-left: 13px; }
.nm div { display: flex; align-items: center; gap: 4px; height: 21px; padding-left: 4px; }
.sz { text-align: right; color: #6d6d6d; }
.picked .nm div, .picked .sz { background: #d9d9d9; }
.hs { display: flex; align-items: center; height: 16px; background: #f0f0f0; color: #444; }
.hs i { flex: 1; height: 15px; margin: 0 96px 0 4px; background: #cdcdcd; }
.e-status { display: flex; align-items: center; height: 24px; padding-left: 14px; color: #26476d; }
.e-status span { margin-right: 21px; }
.e-status span + span { margin-right: 6px; }
.modes { display: flex; margin: 0 4px 0 auto; }
.mode { width: 22px; height: 23px; }
.on { background: #cdeaf9; border: 1px solid #3aa0d8; }

.dialog { left: 683px; top: 160px; width: 363px; height: 509px; background: #f0f0f0; border-color: #666; box-shadow: 0 2px 6px #0003; font: 11px/13px "Liberation Sans", Arial, sans-serif; }
.d-title { display: flex; align-items: center; gap: 5px; height: 30px; padding: 0 9px 0 8px; background: #fff; font: 11px/16px "Open Sans", sans-serif; color: #111; }
.d-title .plain { margin-left: auto; }
.d-tabs { display: flex; align-items: flex-end; height: 27px; padding: 0 6px; }
.d-tabs button { height: 18px; padding: 0 4px 0 3px; border: 1px solid #dcdcdc; border-width: 1px 1px 0 0; background: #f0f0f0; font: inherit; color: #111; }
.d-tabs .active { height: 21px; padding: 0 6px; margin-bottom: -1px; border-width: 1px; border-bottom: 0; background: #fff; }
.panel { flex: 1; margin: 0 8px 0 6px; padding: 0 14px; background: #fff; border: 1px solid #dcdcdc; }
.p-head { display: flex; align-items: center; gap: 41px; height: 53px; padding-top: 8px; }
.p-head svg { margin-bottom: 4px; }
.p-head input { flex: 1; min-width: 0; height: 23px; padding: 0 3px 2px; border: 1px solid #555; background: #fff; font: inherit; }
.sect { padding: 6px 0; border-top: 1px solid #a0a0a0; }
.row { display: grid; grid-template-columns: 73px 1fr auto; align-items: center; height: 26px; }
.app { display: flex; align-items: center; gap: 5px; }
.btn { width: 73px; height: 22px; padding: 0; border: 1px solid #adadad; background: #e1e1e1; color: #111; font: inherit; }
.change { width: 103px; }
.attrs { grid-template-columns: 73px 80px 1fr auto; margin-top: 1px; }
label { display: flex; align-items: center; gap: 3px; }
label input { appearance: none; width: 13px; height: 13px; margin: 0; border: 1px solid #333; background: #fff; }
.secure { grid-template-columns: 73px 1fr 73px; align-items: start; height: 40px; margin-top: 8px; }
.secure p { margin: 0; white-space: nowrap; }
.unb { padding-top: 5px; }
.d-foot { display: flex; align-items: center; justify-content: flex-end; gap: 8px; height: 37px; padding-right: 7px; }
.btn.ok { border: 2px solid #0a78d4; }
.btn:disabled { background: #ccc; border-color: #bfbfbf; color: #838383; }

.mark { position: absolute; right: 48px; bottom: 49px; display: flex; align-items: center; color: #ffffffcc; font: 32px/62px "Roboto", sans-serif; filter: drop-shadow(0 0 2px #0004); pointer-events: none; }
.mark svg { width: 56px; height: 62px; margin: 0 5px; opacity: .7; }

.taskbar { display: flex; height: 40px; background: linear-gradient(90deg, #001822, #00131f 60%, #000a18); color: #fff; }
.start { width: 48px; }
.tsearch { display: flex; align-items: center; width: 288px; padding-left: 12px; background: #f2f2f2; border: 1px solid #b8b8b8; border-width: 1px 1px 1px 0; }
.tsearch input { flex: 1; min-width: 0; margin-left: 10px; padding: 0; border: 0; background: none; font: 14px/20px "Open Sans", sans-serif; color: #333; }
.tsearch input::placeholder { color: #333; opacity: 1; }
.earth { width: 72px; height: 38px; margin-right: 2px; overflow: hidden; }
.apps { display: flex; gap: 1px; }
.apps .plain { width: 48px; }
.apps .tasks { margin-right: 2px; }
.run { border-bottom: 3px solid #76b9ed; border-top: 3px solid transparent; }
.apps .run { width: 40px; margin: 0 4px; }
.apps .act { width: 48px; margin: 0; background: #35474f; }
.tray { display: flex; align-items: center; gap: 8px; margin-left: auto; padding-right: 5px; }
.tray .plain { width: 16px; }
.clock { display: flex; flex-direction: column; align-items: center; width: 58px; line-height: 18px; }
.tray .note { width: 26px; }
.tray i { width: 1px; height: 40px; margin-left: 6px; background: #46506a; }
</style>
